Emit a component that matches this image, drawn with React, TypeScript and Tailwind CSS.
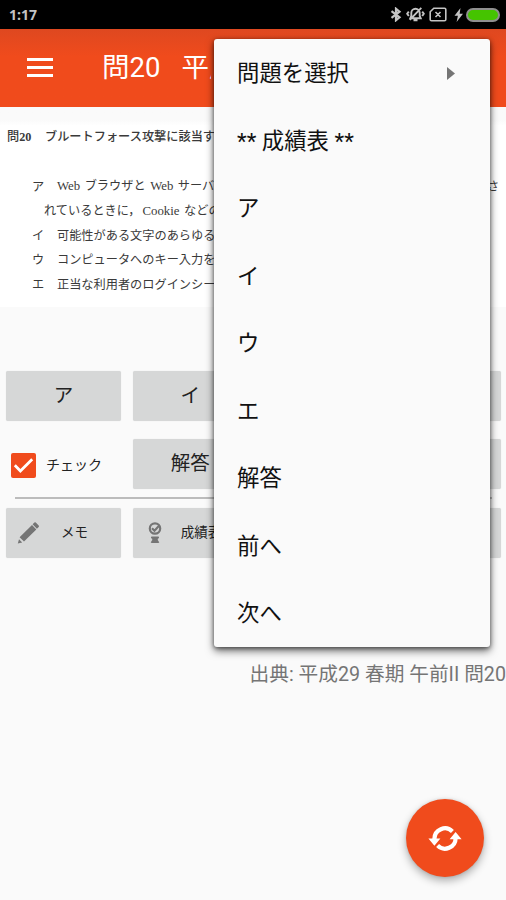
import type { ReactNode } from "react";
import clsx from "clsx";

const MENU_ITEMS = [
  { label: "問題を選択", submenu: true },
  { label: "** 成績表 **" },
  { label: "ア" },
  { label: "イ" },
  { label: "ウ" },
  { label: "エ" },
  { label: "解答" },
  { label: "前へ" },
  { label: "次へ" },
];

function StatusBar() {
  return (
    <div className="flex h-[29px] shrink-0 items-center justify-between bg-black pr-[6px] pl-[9px] text-[#c4c4c4]">
      <span className="font-['Open_Sans',sans-serif] text-[14px] leading-none font-bold">1:17</span>
      <div className="flex items-center">
        {/* bluetooth */}
        <svg width="12" height="15" viewBox="0 0 12 15" fill="none" stroke="currentColor" strokeWidth="2.2">
          <path d="M1.5 4.2 9.5 10.3 6 13.2V1.8L9.5 4.7 1.5 10.8" />
        </svg>
        {/* muted bell */}
        <svg className="ml-[4px]" width="19" height="17" viewBox="0 0 19 17" fill="none" stroke="currentColor" strokeWidth="1.9">
          <path d="M4.3 12.2h10.4l-1-2.4V7a4.2 4.2 0 0 0-8.4 0v2.8L4.3 12.2ZM7.5 14.2h4M3.8 13.8 15.3 1.8M2.8 5.6 1.2 7.8l1.6 2.2M16.2 5.6l1.6 2.2-1.6 2.2" />
        </svg>
        {/* no sim */}
        <svg className="ml-[4px]" width="18" height="15" viewBox="0 0 18 15" fill="none" stroke="currentColor" strokeWidth="1.6">
          <path d="M4.8 1.3h10.7a1.3 1.3 0 0 1 1.3 1.3v9.8a1.3 1.3 0 0 1-1.3 1.3h-13a1.3 1.3 0 0 1-1.3-1.3V4.8ZM6.5 5l5 5M11.5 5l-5 5" />
        </svg>
        {/* charging */}
        <svg className="ml-[7px]" width="10" height="14" viewBox="0 0 10 14" fill="currentColor">
          <path d="M6.5 0 0.5 7.8h3.4L2.6 14 9 5.7H5.6Z" />
        </svg>
        <div className="ml-[2px] h-[14px] w-[34px] rounded-full border-2 border-[#8f8f8f] bg-[#45c400]" />
      </div>
    </div>
  );
}

function Header() {
  return (
    <header className="flex h-[78px] shrink-0 items-center bg-linear-to-b from-[#de4820] to-[#f04b1c] to-35% pl-[27px] text-white">
      <div className="-mt-px flex w-[26px] flex-col gap-[4.5px]">
        <span className="h-[3.5px] bg-white" />
        <span className="h-[3.5px] bg-white" />
        <span className="h-[3.5px] bg-white" />
      </div>
      <h1 className="ml-[49px] flex gap-[21px] text-[27.5px] leading-none font-normal">
        <span>問20</span>
        <span className="w-[30px] overflow-hidden whitespace-nowrap">平成</span>
      </h1>
    </header>
  );
}

function Choice({ mark, children }: { mark?: string; children: ReactNode }) {
  return (
    <div className="flex h-[24.5px] items-center whitespace-nowrap">
      <span className="w-[25px] shrink-0">{mark}</span>
      {children}
    </div>
  );
}

function Question() {
  return (
    <section className="mt-[3px] h-[197px] shrink-0 overflow-hidden bg-white bg-linear-to-b from-[#fafafa] from-5% to-white to-8% pt-[15px] font-['Liberation_Serif','Noto_Sans_CJK_JP',serif] text-[12.2px] text-[#3a3a3a] [word-spacing:1.5px]">
      <div className="flex h-[24.5px] items-center pl-[7px] font-medium whitespace-nowrap">
        <span className="w-[38px] shrink-0">
          問<b>20</b>
        </span>
        <span>ブルートフォース攻撃に該当す</span>
      </div>
      <div className="mt-[25px] pl-[32px]">
        <Choice mark="ア">
          <span className="w-[430px]">
            <span className="text-[12.8px]">Web</span> ブラウザと <span className="text-[12.8px]">Web</span> サーバ
          </span>
          <span>さ</span>
        </Choice>
        <Choice>
          <span className="-ml-[13px]">
            れているときに，<span className="ml-[2px] text-[12.8px]">Cookie</span> などの
          </span>
        </Choice>
        <Choice mark="イ">可能性がある文字のあらゆる</Choice>
        <Choice mark="ウ">コンピュータへのキー入力を</Choice>
        <Choice mark="エ">正当な利用者のログインシー</Choice>
      </div>
    </section>
  );
}

function PadButton({ label, icon, small }: { label?: string; icon?: ReactNode; small?: boolean }) {
  return (
    <button
      type="button"
      className={clsx(
        "flex h-[50px] items-center overflow-hidden rounded-[2px] bg-[#d6d7d7] whitespace-nowrap text-[#222] shadow-[0_0_1px_rgba(0,0,0,0.15)]",
        small ? "pl-[11px] text-[13.5px]" : "justify-center text-[19.5px]"
      )}
    >
      {icon}
      {label}
    </button>
  );
}

function PencilIcon() {
  return (
    <svg className="mr-[21px] shrink-0" width="23" height="23" viewBox="0 0 23 23" fill="#757575">
      <path d="M.8 22.5 2 18.2 5.2 21.5ZM2.6 16.2 15 3.9 19.3 8.4 7 20.6ZM15.6 3.3 17.4 1.6Q18.1 1 18.8 1.6L21.7 4.5Q22.3 5.2 21.7 6L19.9 7.8Z" />
    </svg>
  );
}

function MedalIcon() {
  return (
    <svg className="mr-[19px] ml-[4px] shrink-0" width="14" height="22" viewBox="0 0 14 22" fill="none" stroke="#757575">
      <circle cx="7" cy="6.5" r="5.2" strokeWidth="2.2" />
      <path d="m4 6.2 2.5 2.5 5-5.4" strokeWidth="2.2" />
      <path d="M3.3 15h7.4L9.2 17.7l1.5 2.8H3.3l1.5-2.8Z" fill="#757575" strokeWidth="1" />
    </svg>
  );
}

function AnswerPad() {
  return (
    <section className="mt-[64px] shrink-0 pr-[5px] pl-[6px]">
      <div className="grid grid-cols-4 gap-x-[11.6px]">
        <PadButton label="ア" />
        <PadButton label="イ" />
        <PadButton />
        <PadButton />
      </div>
      <div className="mt-[17.5px] grid grid-cols-4 gap-x-[11.6px]">
        <label className="flex items-center pt-[4px] pl-[5px] text-[14px] text-[#222]">
          <span className="grid h-[25px] w-[25px] place-items-center rounded-[2px] bg-[#f04b1c]">
            <svg width="21" height="17" viewBox="0 0 21 17" fill="none" stroke="#fff" strokeWidth="2.8">
              <path d="m1.8 8.2 5.6 5.7L19.2 2.2" />
            </svg>
          </span>
          <span className="ml-[10px]">チェック</span>
        </label>
        <PadButton label="解答" />
        <PadButton />
        <PadButton />
      </div>
      <div className="mt-[8px] mr-[9px] ml-[9px] h-[2px] bg-[#bcbcbc]" />
      <div className="mt-[9px] grid grid-cols-4 gap-x-[11.6px]">
        <PadButton label="メモ" icon={<PencilIcon />} small />
        <PadButton label="成績表" icon={<MedalIcon />} small />
        <PadButton />
        <PadButton />
      </div>
    </section>
  );
}

function OverflowMenu() {
  return (
    <ul
      role="menu"
      className="absolute top-[39px] left-[214px] w-[276px] rounded-[3px] bg-[#fafafa] text-[22.4px] text-[#111] shadow-[0_4px_9px_rgba(0,0,0,0.55),0_1px_4px_rgba(0,0,0,0.5)]"
    >
      {MENU_ITEMS.map((item) => (
        <li key={item.label} role="menuitem" className="flex h-[67.5px] items-center justify-between pt-px pr-[35px] pl-[23px] leading-none">
          {item.label}
          {item.submenu && (
            <svg width="8" height="13" viewBox="0 0 8 13" fill="#757575">
              <path d="M0 0 8 6.5 0 13Z" />
            </svg>
          )}
        </li>
      ))}
    </ul>
  );
}

function RefreshFab() {
  return (
    <button
      type="button"
      aria-label="更新"
      className="absolute top-[799px] left-[406px] grid h-[78px] w-[78px] place-items-center rounded-full bg-[#f04b1c] shadow-[0_4px_8px_rgba(0,0,0,0.3),0_0_3px_rgba(0,0,0,0.12)]"
    >
      <svg width="34" height="30" viewBox="0 0 34 30" fill="none" stroke="#fff" strokeWidth="4.2">
        <path d="M6.4 16a10.6 10.6 0 0 1 18-7.6M27.6 15a10.6 10.6 0 0 1-18 7.6" />
        <path d="M.4 15.5h12L6.4 22.7ZM21.6 16.2h12L27.6 9Z" fill="#fff" stroke="none" />
      </svg>
    </button>
  );
}

export default function App() {
  return (
    <div className="relative flex h-[900px] w-[506px] flex-col overflow-hidden bg-[#fafafa] font-[Roboto,'Noto_Sans_CJK_JP',sans-serif]">
      <StatusBar />
      <Header />
      <Question />
      <AnswerPad />
      <p className="mt-[102px] text-right text-[19.7px] leading-[30px] whitespace-nowrap text-[#757575]">
        出典: 平成29 春期 午前II 問20
      </p>
      <OverflowMenu />
      <RefreshFab />
    </div>
  );
}
